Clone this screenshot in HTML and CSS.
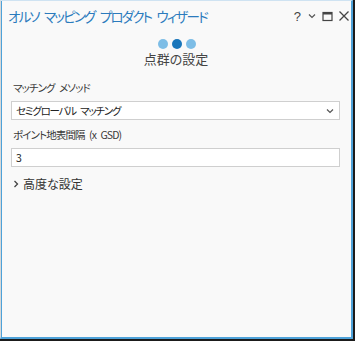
FILE: index.html
```html
<!DOCTYPE html>
<html lang="ja">
<head>
    <meta charset="UTF-8">
    <title>オルソ マッピング プロダクト ウィザード</title>
    <link rel="stylesheet" href="styles.css">
</head>
<body>
    <div class="window">
        <div class="titlebar">
            <span class="title">オルソ マッピング プロダクト ウィザード</span>
            <div class="win-buttons">
                <span class="btn-help">?</span>
                <svg class="btn" width="10" height="10" viewBox="0 0 10 10"><path d="M2 3.5 L5 6.5 L8 3.5" fill="none" stroke="#555" stroke-width="1.2"/></svg>
                <svg class="btn" width="11" height="11" viewBox="0 0 11 11"><rect x="1" y="1.5" width="9" height="8" fill="none" stroke="#444" stroke-width="1.2"/><rect x="1" y="1.5" width="9" height="2" fill="#444"/></svg>
                <svg class="btn" width="12" height="12" viewBox="0 0 12 12"><path d="M1.5 1.5 L10.5 10.5 M10.5 1.5 L1.5 10.5" stroke="#444" stroke-width="1.3"/></svg>
            </div>
        </div>

        <div class="steps">
            <span class="dot"></span>
            <span class="dot current"></span>
            <span class="dot"></span>
        </div>
        <div class="step-title">点群の設定</div>

        <div class="form">
            <label class="field-label">マッチング メソッド</label>
            <div class="select">
                <span>セミグローバル マッチング</span>
                <svg width="10" height="10" viewBox="0 0 10 10"><path d="M2 3.5 L5 6.5 L8 3.5" fill="none" stroke="#555" stroke-width="1.2"/></svg>
            </div>

            <label class="field-label">ポイント地表間隔 (x GSD)</label>
            <div class="input">3</div>

            <div class="expander">
                <svg width="8" height="10" viewBox="0 0 8 10"><path d="M2.5 2 L5.5 5 L2.5 8" fill="none" stroke="#444" stroke-width="1.3"/></svg>
                <span>高度な設定</span>
            </div>
        </div>
    </div>
</body>
</html>
```

FILE: styles.css
```css
* {
    margin: 0;
    padding: 0;
    box-sizing: border-box;
}

body {
    width: 355px;
    height: 341px;
    background-color: #1b1b1b;
    font-family: "Noto Sans CJK JP", "Noto Sans", sans-serif;
    font-feature-settings: "palt";
    color: #333;
    overflow: hidden;
}

.window {
    width: 353px;
    height: 339px;
    background-color: #f9f9f9;
    border: 2px solid #4ea2d9;
    border-top: 1px solid #cfe3f2;
    border-left: 1px solid #d8d8d8;
    box-shadow: inset 1px 0 0 #4ea2d9;
}

.titlebar {
    display: flex;
    align-items: center;
    justify-content: space-between;
    height: 30px;
    padding: 0 1px 0 7px;
}

.title {
    color: #2b7bbd;
    font-size: 13.5px;
    letter-spacing: -1.8px;
    word-spacing: 4px;
}

.win-buttons {
    display: flex;
    align-items: center;
    gap: 5px;
}

.btn-help {
    font-family: "Liberation Sans", sans-serif;
    font-size: 13px;
    color: #444;
    margin-right: 1px;
}

.steps {
    display: flex;
    justify-content: center;
    gap: 4px;
    margin-top: 8px;
    margin-left: 2px;
}

.dot {
    width: 10px;
    height: 10px;
    border-radius: 50%;
    background-color: #7dbde6;
}

.dot.current {
    background-color: #1a76ba;
}

.step-title {
    text-align: center;
    font-size: 13px;
    color: #444;
    line-height: 18px;
    margin-top: 1px;
}

.form {
    display: flex;
    flex-direction: column;
    padding: 0 11px 0 10px;
    margin-top: 12px;
}

.field-label {
    font-size: 10.5px;
    letter-spacing: -0.9px;
    word-spacing: 3px;
    line-height: 16px;
    color: #3a3a3a;
    padding-left: 2px;
    margin-bottom: 5px;
}

.select,
.input {
    display: flex;
    align-items: center;
    justify-content: space-between;
    height: 19px;
    background-color: #fff;
    border: 1px solid #cfcfcf;
    font-size: 10.5px;
    letter-spacing: -1.2px;
    word-spacing: 3px;
    color: #222;
    padding: 0 4px 0 4px;
    margin-bottom: 7px;
}

.expander {
    display: flex;
    align-items: center;
    gap: 3px;
    font-size: 12px;
    color: #333;
    margin-top: 1px;
    padding-left: 1px;
}
```
